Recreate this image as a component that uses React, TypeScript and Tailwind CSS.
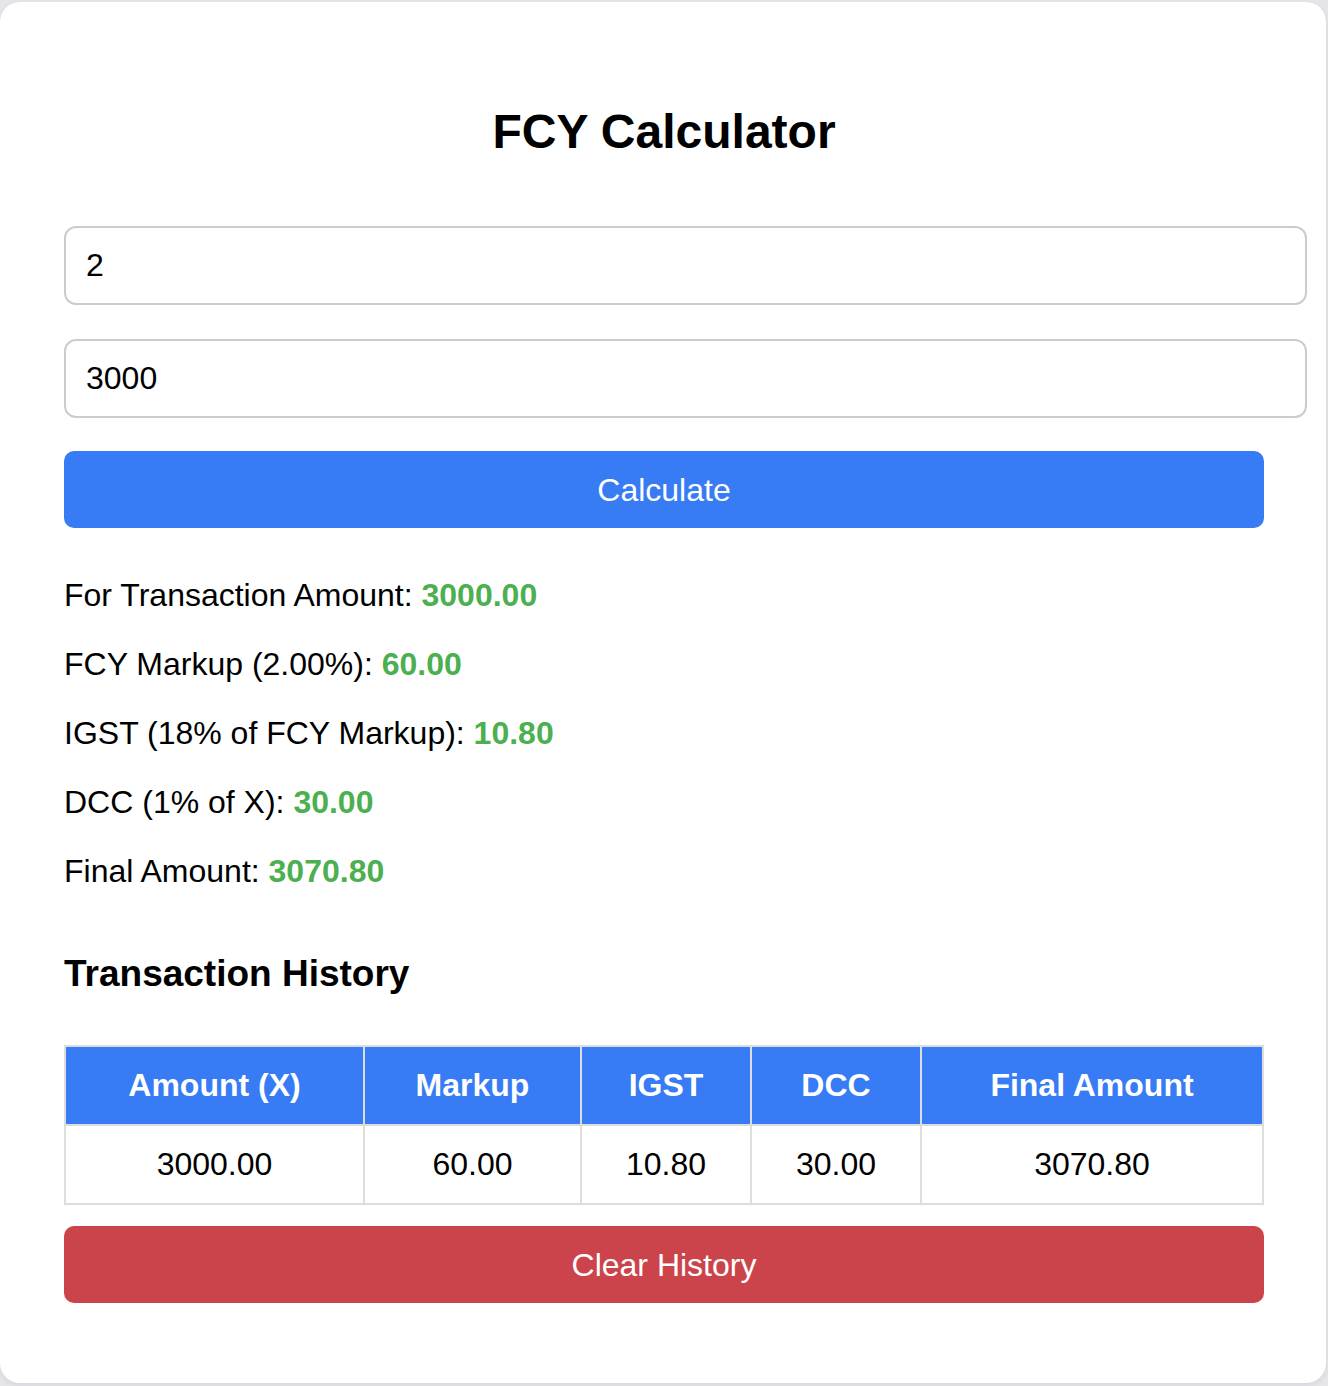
import { useState } from 'react';

type Row = {
  amount: number;
  markup: number;
  igst: number;
  dcc: number;
  total: number;
};

function compute(rate: number, amount: number): Row {
  const markup = (amount * rate) / 100;
  const igst = markup * 0.18;
  const dcc = amount * 0.01;
  return { amount, markup, igst, dcc, total: amount + markup + igst };
}

export default function App() {
  const [rate, setRate] = useState('2');
  const [amount, setAmount] = useState('3000');
  const [result, setResult] = useState<Row>(compute(2, 3000));
  const [history, setHistory] = useState<Row[]>([compute(2, 3000)]);

  function handleCalculate() {
    const r = parseFloat(rate) || 0;
    const a = parseFloat(amount) || 0;
    const row = compute(r, a);
    setResult(row);
    setHistory((h) => [...h, row]);
  }

  const lines: [string, number][] = [
    ['For Transaction Amount', result.amount],
    [`FCY Markup (${(parseFloat(rate) || 0).toFixed(2)}%)`, result.markup],
    ['IGST (18% of FCY Markup)', result.igst],
    ['DCC (1% of X)', result.dcc],
    ['Final Amount', result.total],
  ];

  return (
    <div className="min-h-screen bg-[#e6e6ea] pt-[2px] font-['Liberation_Sans',Arial,sans-serif] text-black">
      <div className="w-[1326px] rounded-[20px] bg-white pb-[80px] pl-[64px] pr-[62px] pt-[102px] shadow-[0_2px_6px_rgba(0,0,0,0.08)]">
        <h2 className="text-center text-[48px] font-bold leading-[56px]">FCY Calculator</h2>

        <input
          type="number"
          value={rate}
          onChange={(e) => setRate(e.target.value)}
          className="mt-[66px] block h-[79px] w-[1243px] rounded-[12px] border-2 border-[#cccccc] px-[20px] text-[32px] outline-none"
        />
        <input
          type="number"
          value={amount}
          onChange={(e) => setAmount(e.target.value)}
          className="mt-[34px] block h-[79px] w-[1243px] rounded-[12px] border-2 border-[#cccccc] px-[20px] text-[32px] outline-none"
        />
        <button
          type="button"
          onClick={handleCalculate}
          className="mt-[33px] block h-[77px] w-full rounded-[10px] bg-[#377bf5] text-[32px] text-white"
        >
          Calculate
        </button>

        <div className="mt-[49px] flex flex-col gap-[32px]">
          {lines.map(([label, value]) => (
            <p key={label} className="text-[32px] leading-[37px]">
              {label}: <span className="font-bold text-[#4caf50]">{value.toFixed(2)}</span>
            </p>
          ))}
        </div>

        <h3 className="mt-[62px] text-[37px] font-bold leading-[43px]">Transaction History</h3>

        <table className="mt-[50px] w-full table-fixed border-collapse text-center text-[32px] leading-[37px]">
          <thead>
            <tr className="bg-[#377bf5] text-white">
              <th className="w-[299px] border-2 border-[#dddddd] py-[20px] font-bold">Amount (X)</th>
              <th className="w-[217px] border-2 border-[#dddddd] py-[20px] font-bold">Markup</th>
              <th className="w-[170px] border-2 border-[#dddddd] py-[20px] font-bold">IGST</th>
              <th className="w-[170px] border-2 border-[#dddddd] py-[20px] font-bold">DCC</th>
              <th className="border-2 border-[#dddddd] py-[20px] font-bold">Final Amount</th>
            </tr>
          </thead>
          <tbody>
            {history.map((row, i) => (
              <tr key={i}>
                <td className="border-2 border-[#dddddd] py-[20px]">{row.amount.toFixed(2)}</td>
                <td className="border-2 border-[#dddddd] py-[20px]">{row.markup.toFixed(2)}</td>
                <td className="border-2 border-[#dddddd] py-[20px]">{row.igst.toFixed(2)}</td>
                <td className="border-2 border-[#dddddd] py-[20px]">{row.dcc.toFixed(2)}</td>
                <td className="border-2 border-[#dddddd] py-[20px]">{row.total.toFixed(2)}</td>
              </tr>
            ))}
          </tbody>
        </table>

        <button
          type="button"
          onClick={() => setHistory([])}
          className="mt-[21px] block h-[77px] w-full rounded-[10px] bg-[#cc444b] text-[32px] text-white"
        >
          Clear History
        </button>
      </div>
    </div>
  );
}
